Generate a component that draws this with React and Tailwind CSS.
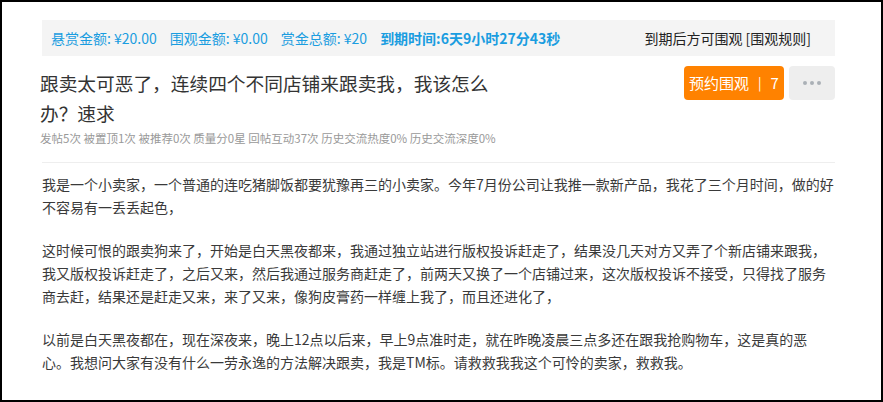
import React from "react";

const font = { fontFamily: '"Noto Sans CJK SC", "Microsoft YaHei", sans-serif' };

export default function App() {
  return (
    <div
      className="w-[883px] h-[402px] border-2 border-black bg-white box-border overflow-hidden"
      style={font}
    >
      <div className="pl-[40px] pr-[46px] pt-[18px]">
        {/* bounty bar */}
        <div className="h-[36px] bg-[#f4f4f4] flex items-center justify-between pl-[9px] pr-[24px] text-[14px]">
          <div className="flex items-center gap-[13px] text-[#1a9de0]">
            <span>悬赏金额: ¥20.00</span>
            <span>围观金额: ¥0.00</span>
            <span>赏金总额: ¥20</span>
            <span className="font-bold">到期时间:6天9小时27分43秒</span>
          </div>
          <div className="text-[#222]">到期后方可围观 [围观规则]</div>
        </div>

        {/* title row */}
        <div className="mt-[10px] flex justify-between items-start">
          <div>
            <h1 className="w-[470px] pt-[2px] text-[18.7px] leading-[30px] text-[#333] font-normal -ml-[2px]">
              跟卖太可恶了，连续四个不同店铺来跟卖我，我该怎么办？速求
            </h1>
            <div className="text-[11.5px] leading-[20px] text-[#999] -ml-[2px]">
              发帖5次 被置顶1次 被推荐0次 质量分0星 回帖互动37次 历史交流热度0% 历史交流深度0%
            </div>
          </div>
          <div className="flex gap-[5px]">
            <button className="w-[100px] h-[34px] rounded-[4px] bg-[#ff8200] text-white text-[15px] flex items-center justify-center gap-[9px]">
              <span>预约围观</span>
              <span className="text-[13px]">|</span>
              <span>7</span>
            </button>
            <button className="w-[46px] h-[34px] rounded-[4px] bg-[#eeeeee] flex items-center justify-center gap-[3px]">
              <span className="w-[4px] h-[4px] rounded-full bg-[#aab0b6]"></span>
              <span className="w-[4px] h-[4px] rounded-full bg-[#aab0b6]"></span>
              <span className="w-[4px] h-[4px] rounded-full bg-[#aab0b6]"></span>
            </button>
          </div>
        </div>

        <div className="mt-[14px] h-px bg-[#eeeeee]"></div>

        {/* body */}
        <div className="mt-[10px] text-[14px] leading-[23px] text-[#3a3a3a]">
          <p>
            我是一个小卖家，一个普通的连吃猪脚饭都要犹豫再三的小卖家。今年7月份公司让我推一款新产品，我花了三个月时间，做的好不容易有一丢丢起色，
          </p>
          <p className="mt-[20px]">
            这时候可恨的跟卖狗来了，开始是白天黑夜都来，我通过独立站进行版权投诉赶走了，结果没几天对方又弄了个新店铺来跟我，我又版权投诉赶走了，之后又来，然后我通过服务商赶走了，前两天又换了一个店铺过来，这次版权投诉不接受，只得找了服务商去赶，结果还是赶走又来，来了又来，像狗皮膏药一样缠上我了，而且还进化了，
          </p>
          <p className="mt-[20px]">
            以前是白天黑夜都在，现在深夜来，晚上12点以后来，早上9点准时走，就在昨晚凌晨三点多还在跟我抢购物车，这是真的恶心。我想问大家有没有什么一劳永逸的方法解决跟卖，我是TM标。请救救我我这个可怜的卖家，救救我。
          </p>
        </div>
      </div>
    </div>
  );
}
